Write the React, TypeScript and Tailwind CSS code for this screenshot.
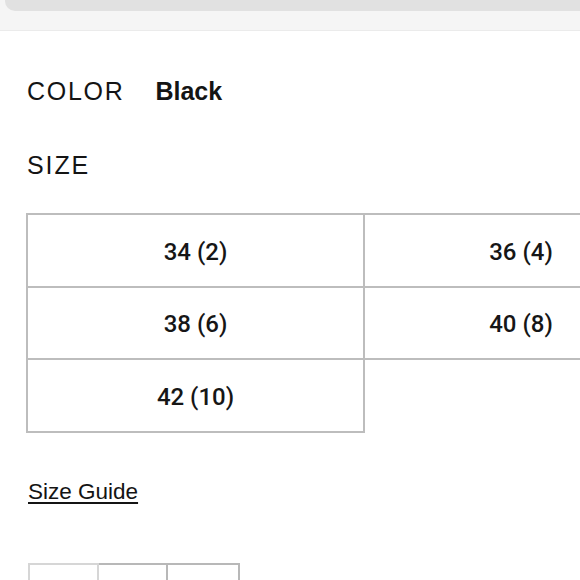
import React from "react";

const cellBase =
  "flex items-center justify-center border-r-2 border-b-2 border-[#bdbdbd] text-[24px] text-[#161616] font-medium";

export default function App() {
  return (
    <div
      className="w-[580px] h-[580px] overflow-hidden bg-white"
      style={{ fontFamily: '"Liberation Sans", Arial, sans-serif' }}
    >
      <div className="h-[31px] bg-[#f5f5f5] border-b border-[#ebebeb]">
        <div className="ml-[5px] h-[11px] bg-[#e1e1e1] rounded-bl-[10px]" />
      </div>

      <div className="pl-[26px]">
        <div className="mt-[45px] flex items-center h-[30px] leading-[30px] text-[25px] text-[#141414]">
          <span className="pl-[1px] tracking-[1.7px]">COLOR</span>
          <span className="ml-[31px] font-bold">Black</span>
        </div>

        <div className="mt-[44px] h-[30px] leading-[30px] text-[25px] text-[#141414] pl-[1px] tracking-[1.9px]">
          SIZE
        </div>

        <div
          className="mt-[33px] grid grid-cols-[339px_314px] w-[653px]"
          style={{ fontFamily: 'Roboto, "Liberation Sans", sans-serif' }}
        >
          <div className={`${cellBase} border-l-2 border-t-2 h-[75px] pt-[2px]`}>34 (2)</div>
          <div className={`${cellBase} border-t-2 h-[75px] pt-[2px]`}>36 (4)</div>
          <div className={`${cellBase} border-l-2 h-[72px] pt-[2px]`}>38 (6)</div>
          <div className={`${cellBase} h-[72px] pt-[2px]`}>40 (8)</div>
          <div className={`${cellBase} border-l-2 h-[73px] pt-[2px]`}>42 (10)</div>
        </div>

        <div className="mt-[45px] h-[28px] leading-[28px] text-[22.5px] text-[#141414] pl-[2px]">
          <span className="underline decoration-[2px] underline-offset-[3px]">Size Guide</span>
        </div>

        <div className="mt-[57px] ml-[2px] flex">
          <div className="w-[71px] h-[40px] border-2 border-[#d6d6d6]" />
          <div className="w-[69px] h-[40px] border-2 border-l-0 border-[#b8b8b8]" />
          <div className="w-[72px] h-[40px] border-2 border-l-0 border-[#b8b8b8]" />
        </div>
      </div>
    </div>
  );
}
